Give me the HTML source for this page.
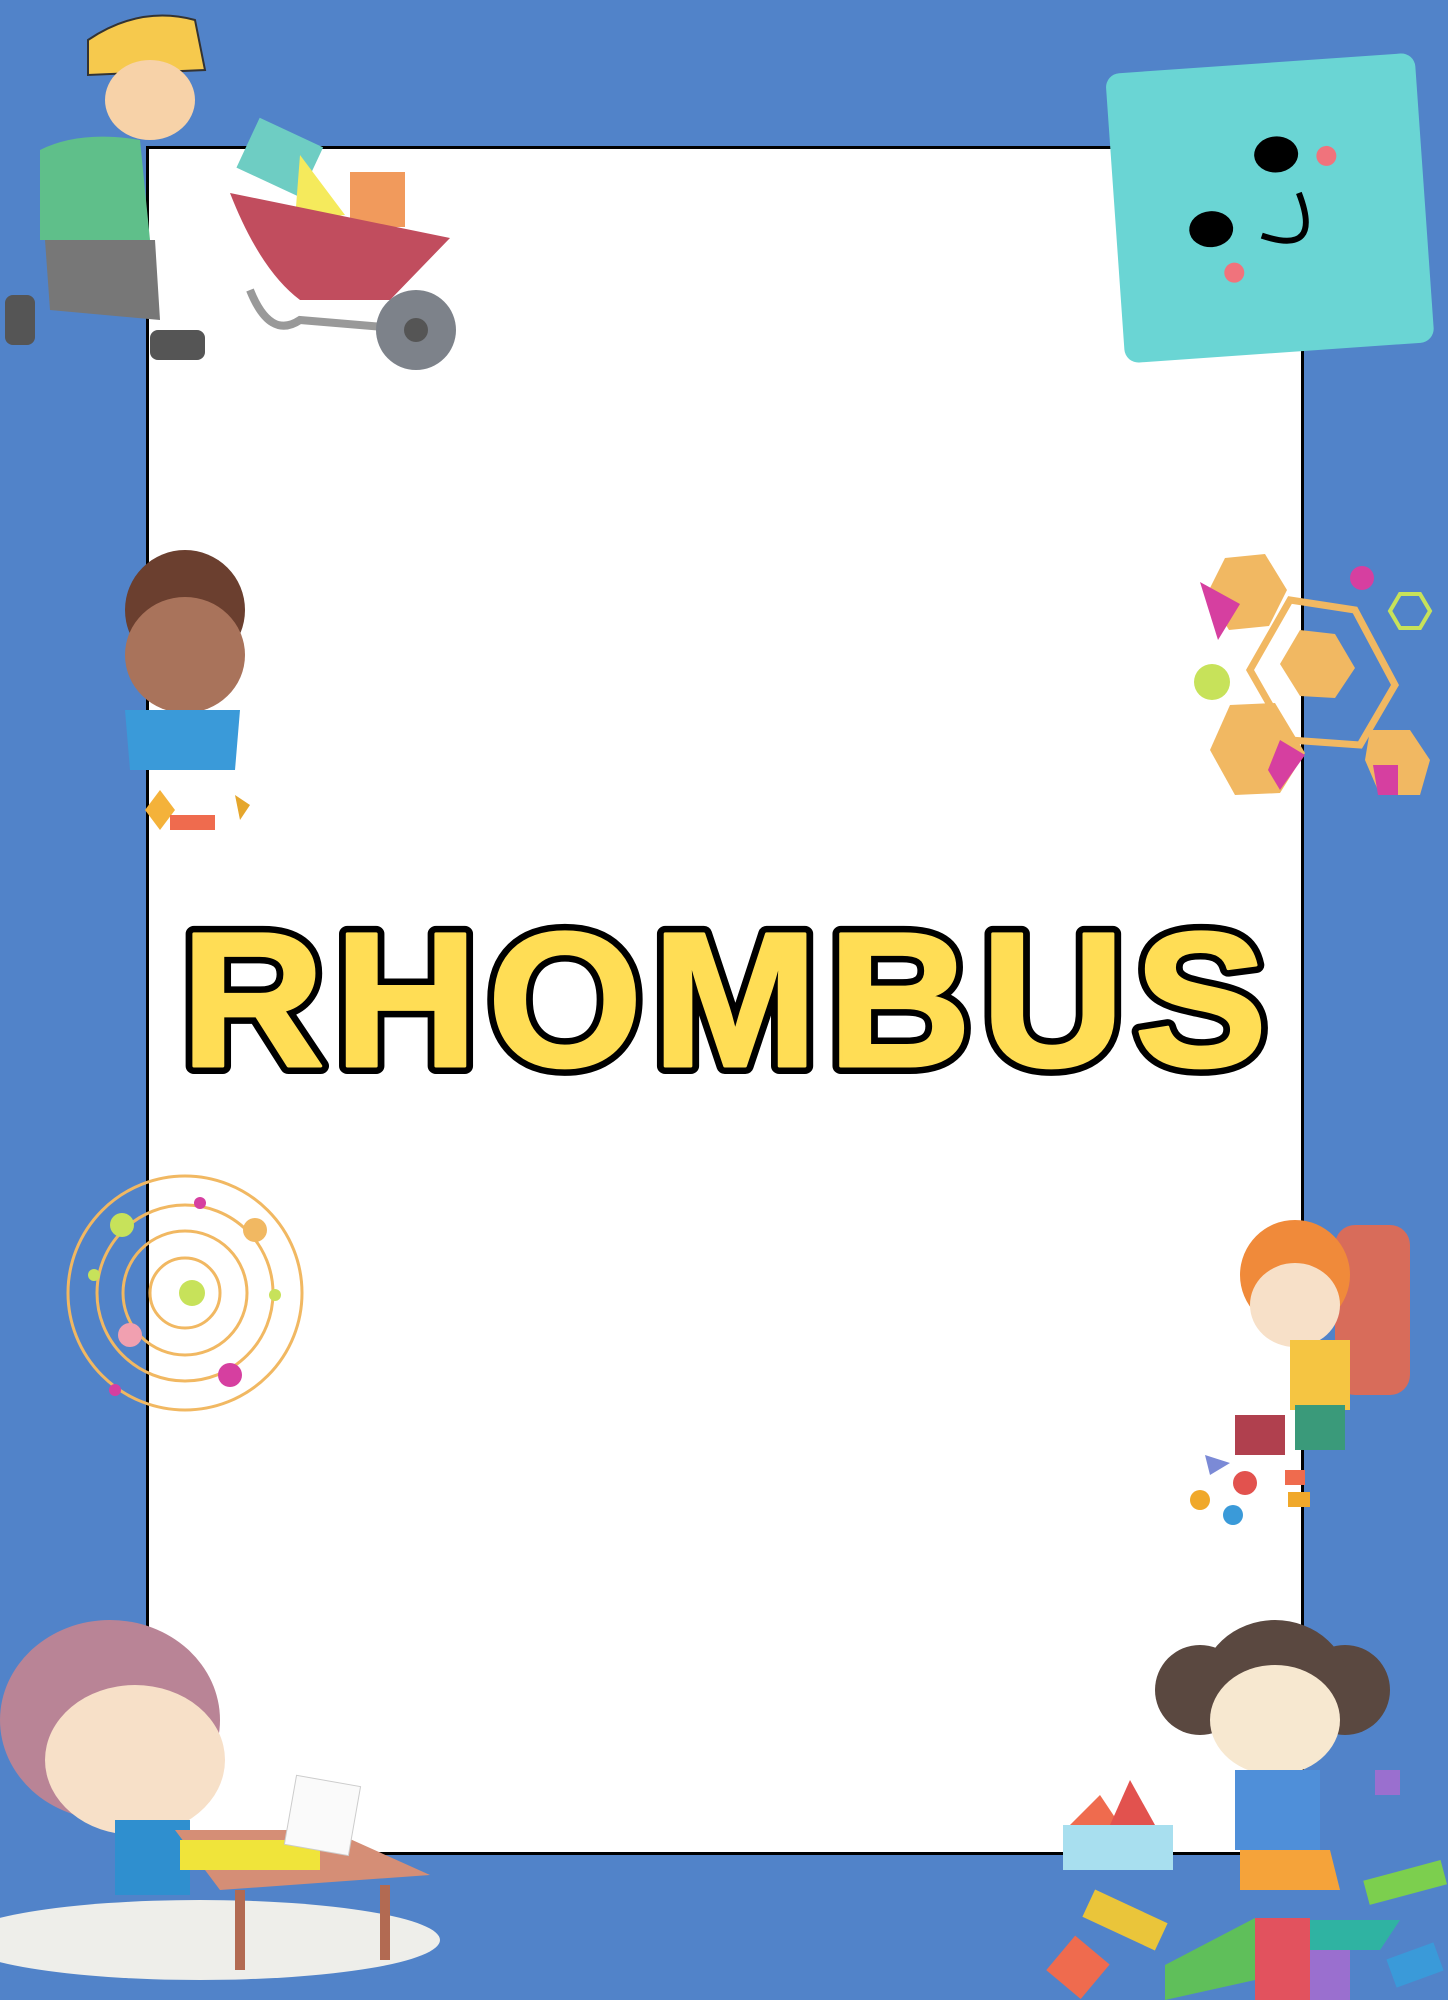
<!DOCTYPE html>
<html><head><meta charset="utf-8"><style>
html,body{margin:0;padding:0}
body{width:1448px;height:2000px;background:#5183c9;position:relative;overflow:hidden;font-family:"Liberation Sans",sans-serif}
.panel{position:absolute;left:146px;top:146px;width:1152px;height:1703px;background:#fff;border:3px solid #000}
svg{position:absolute;left:0;top:0}
</style></head><body>
<div class="panel"></div>
<svg width="1448" height="2000" viewBox="0 0 1448 2000">
<!-- title -->
<g transform="translate(724 0) scale(1.04 1) translate(-724 0)">
<text x="724" y="1066" text-anchor="middle" font-family="Liberation Sans" font-weight="bold" font-size="192" textLength="1045" lengthAdjust="spacing" fill="#ffdd55" stroke="#000" stroke-width="16" stroke-linejoin="round">RHOMBUS</text>
<text x="724" y="1066" text-anchor="middle" font-family="Liberation Sans" font-weight="bold" font-size="192" textLength="1045" lengthAdjust="spacing" fill="#ffdd55" stroke="#ffdd55" stroke-width="3" stroke-linejoin="round">RHOMBUS</text>
</g>

<!-- top-left boy with wheelbarrow -->
<path d="M88 40 Q140 5 195 20 L205 70 L88 75 Z" fill="#f6c94d" stroke="#333" stroke-width="2"/>
<ellipse cx="150" cy="100" rx="45" ry="40" fill="#f7d2a8"/>
<path d="M40 150 Q80 130 140 140 L150 240 L40 240 Z" fill="#5fbf8a"/>
<path d="M45 240 L155 240 L160 320 L50 310 Z" fill="#777"/>
<rect x="5" y="295" width="30" height="50" fill="#555" rx="8"/>
<rect x="150" y="330" width="55" height="30" fill="#555" rx="8"/>
<rect x="245" y="130" width="70" height="55" fill="#6ecdc3" transform="rotate(25 280 157)"/>
<path d="M300 155 L345 215 L295 220 Z" fill="#f5ea5c"/>
<rect x="350" y="172" width="55" height="55" fill="#f19a5c"/>
<path d="M230 193 L450 238 L390 300 L300 300 Q260 270 230 193 Z" fill="#c14d5e"/>
<path d="M250 290 Q270 340 300 320 L420 330" fill="none" stroke="#999" stroke-width="8"/>
<circle cx="416" cy="330" r="40" fill="#7d828a"/>
<circle cx="416" cy="330" r="12" fill="#555"/>

<!-- square face -->
<g transform="rotate(-4 1270 210)">
<rect x="1115" y="63" width="310" height="290" rx="14" fill="#6ad5d4"/>
<ellipse cx="1280" cy="155" rx="22" ry="18" fill="#000"/>
<ellipse cx="1210" cy="225" rx="22" ry="18" fill="#000"/>
<circle cx="1330" cy="160" r="10" fill="#f0737c"/>
<circle cx="1230" cy="270" r="10" fill="#f0737c"/>
<path d="M1300 195 Q1320 260 1260 235" fill="none" stroke="#000" stroke-width="6"/>
</g>

<!-- curly kid -->
<circle cx="185" cy="610" r="60" fill="#6b3f2f"/>
<ellipse cx="185" cy="655" rx="60" ry="58" fill="#a9735b"/>
<path d="M125 710 L240 710 L235 770 L130 770 Z" fill="#3a9ad9"/>
<path d="M160 790 l15 20 l-15 20 l-15 -20 Z" fill="#f4b23a"/>
<rect x="170" y="815" width="45" height="15" fill="#ef6b4e"/>
<path d="M235 795 l15 10 l-10 15 Z" fill="#e5a62c"/>

<!-- hexagons -->
<path d="M1225 558 l40 -4 l22 36 l-18 36 l-40 4 l-22 -36 Z" fill="#f1b862"/>
<path d="M1200 582 l40 22 l-22 36 Z" fill="#d63fa0"/>
<path d="M1290 600 l65 10 l40 75 l-35 60 l-70 -5 l-40 -70 Z" fill="none" stroke="#f1b862" stroke-width="7"/>
<path d="M1300 630 l35 4 l20 34 l-20 30 l-35 -2 l-20 -32 Z" fill="#f1b862"/>
<path d="M1230 705 l45 -2 l30 50 l-25 40 l-45 2 l-25 -45 Z" fill="#f1b862"/>
<path d="M1280 740 l25 15 l-25 35 l-12 -20 Z" fill="#d63fa0"/>
<path d="M1370 730 l40 0 l20 30 l-10 35 l-40 0 l-15 -35 Z" fill="#f1b862"/>
<path d="M1373 765 l25 0 l0 30 l-20 0 Z" fill="#d63fa0"/>
<circle cx="1362" cy="578" r="12" fill="#d63fa0"/>
<path d="M1400 594 l20 0 l10 17 l-10 17 l-20 0 l-10 -17 Z" fill="none" stroke="#c7e25a" stroke-width="4"/>
<circle cx="1212" cy="682" r="18" fill="#c7e25a"/>

<!-- orbits -->
<g fill="none" stroke="#f1b862" stroke-width="3">
<circle cx="185" cy="1293" r="117"/><circle cx="185" cy="1293" r="88"/><circle cx="185" cy="1293" r="62"/><circle cx="185" cy="1293" r="35"/>
</g>
<circle cx="192" cy="1293" r="13" fill="#c7e25a"/>
<circle cx="122" cy="1225" r="12" fill="#c7e25a"/>
<circle cx="255" cy="1230" r="12" fill="#f1b862"/>
<circle cx="130" cy="1335" r="12" fill="#f1a0b0"/>
<circle cx="230" cy="1375" r="12" fill="#d63fa0"/>
<circle cx="200" cy="1203" r="6" fill="#d63fa0"/>
<circle cx="94" cy="1275" r="6" fill="#c7e25a"/>
<circle cx="275" cy="1295" r="6" fill="#c7e25a"/>
<circle cx="115" cy="1390" r="6" fill="#d63fa0"/>

<!-- right girl with backpack -->
<rect x="1335" y="1225" width="75" height="170" rx="20" fill="#d86c5a"/>
<circle cx="1295" cy="1275" r="55" fill="#f08a3a"/>
<ellipse cx="1295" cy="1305" rx="45" ry="42" fill="#f7e0c8"/>
<rect x="1290" y="1340" width="60" height="70" fill="#f5c542"/>
<rect x="1295" y="1405" width="50" height="45" fill="#3a9a7a"/>
<rect x="1235" y="1415" width="50" height="40" fill="#b0404e"/>
<path d="M1205 1455 l25 8 l-20 12 Z" fill="#7b8ad6"/>
<circle cx="1245" cy="1483" r="12" fill="#e2524e"/>
<circle cx="1200" cy="1500" r="10" fill="#f0a82a"/>
<circle cx="1233" cy="1515" r="10" fill="#3a9ad9"/>
<rect x="1285" y="1470" width="20" height="15" fill="#ef6b4e"/>
<rect x="1288" y="1492" width="22" height="15" fill="#f0a82a"/>

<!-- bottom-left boy -->
<ellipse cx="200" cy="1940" rx="240" ry="40" fill="#eeeeea"/>
<ellipse cx="110" cy="1720" rx="110" ry="100" fill="#b98496"/>
<ellipse cx="135" cy="1760" rx="90" ry="75" fill="#f7e0c8"/>
<rect x="115" y="1820" width="75" height="75" fill="#2f8fcf"/>
<path d="M175 1830 L330 1830 L430 1875 L220 1890 Z" fill="#d58e76"/>
<rect x="180" y="1840" width="140" height="30" fill="#f0e43a"/>
<rect x="290" y="1780" width="65" height="70" fill="#fafafa" stroke="#ccc" transform="rotate(10 320 1815)"/>
<rect x="235" y="1890" width="10" height="80" fill="#b26a52"/>
<rect x="380" y="1885" width="10" height="75" fill="#b26a52"/>

<!-- bottom-right girl -->
<circle cx="1200" cy="1690" r="45" fill="#5a4840"/>
<circle cx="1345" cy="1690" r="45" fill="#5a4840"/>
<ellipse cx="1275" cy="1690" rx="75" ry="70" fill="#5a4840"/>
<ellipse cx="1275" cy="1720" rx="65" ry="55" fill="#f7e8d0"/>
<rect x="1235" y="1770" width="85" height="80" fill="#4f8fd9"/>
<path d="M1240 1850 l90 0 l10 40 l-100 0 Z" fill="#f5a33a"/>
<rect x="1063" y="1825" width="110" height="45" fill="#a8dfef"/>
<path d="M1070 1825 l30 -30 l20 30 Z" fill="#ef6b4e"/>
<path d="M1110 1825 l20 -45 l25 45 Z" fill="#e2524e"/>
<rect x="1375" y="1770" width="25" height="25" fill="#9a6fcf"/>
<rect x="1085" y="1905" width="80" height="30" fill="#eac53a" transform="rotate(25 1125 1920)"/>
<rect x="1055" y="1945" width="45" height="45" fill="#ef6b4e" transform="rotate(40 1078 1968)"/>
<path d="M1165 1965 L1255 1918 L1255 1980 L1165 2000 Z" fill="#5fbf5a"/>
<rect x="1255" y="1918" width="55" height="82" fill="#e2525e"/>
<rect x="1310" y="1950" width="40" height="50" fill="#9a6fcf"/>
<path d="M1310 1920 l90 0 l-20 30 l-70 0 Z" fill="#2fb3a2"/>
<rect x="1365" y="1870" width="80" height="25" fill="#7ccf4e" transform="rotate(-15 1405 1882)"/>
<rect x="1390" y="1950" width="50" height="30" fill="#3a9ad9" transform="rotate(-20 1415 1965)"/>
</svg>
</body></html>
